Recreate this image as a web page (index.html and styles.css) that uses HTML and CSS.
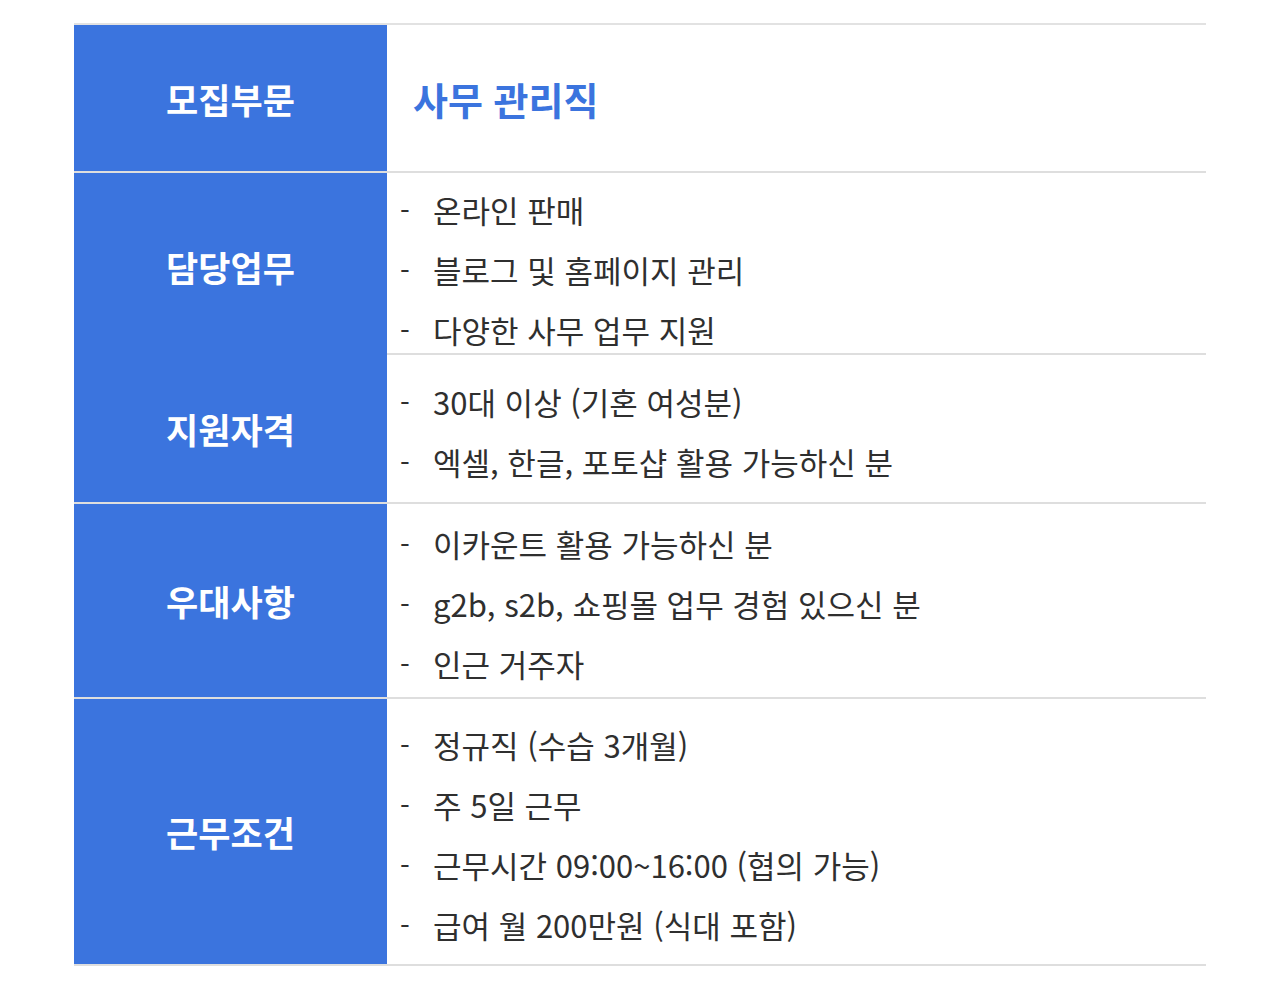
FILE: index.html
```html
<!DOCTYPE html>
<html lang="ko">
<head>
<meta charset="utf-8">
<link rel="stylesheet" href="styles.css">
</head>
<body>
<div class="table">
  <div class="row r1">
    <div class="label">모집부문</div>
    <div class="content"><div class="title">사무 관리직</div></div>
  </div>
  <div class="row r2">
    <div class="label">담당업무</div>
    <ul class="content list">
      <li>온라인 판매</li>
      <li>블로그 및 홈페이지 관리</li>
      <li>다양한 사무 업무 지원</li>
    </ul>
  </div>
  <div class="row r3">
    <div class="label">지원자격</div>
    <ul class="content list">
      <li>30대 이상 (기혼 여성분)</li>
      <li>엑셀, 한글, 포토샵 활용 가능하신 분</li>
    </ul>
  </div>
  <div class="row r4">
    <div class="label">우대사항</div>
    <ul class="content list">
      <li>이카운트 활용 가능하신 분</li>
      <li>g2b, s2b, 쇼핑몰 업무 경험 있으신 분</li>
      <li>인근 거주자</li>
    </ul>
  </div>
  <div class="row r5">
    <div class="label">근무조건</div>
    <ul class="content list">
      <li>정규직 (수습 3개월)</li>
      <li>주 5일 근무</li>
      <li>근무시간 09:00~16:00 (협의 가능)</li>
      <li>급여 월 200만원 (식대 포함)</li>
    </ul>
  </div>
</div>
</body>
</html>
```

FILE: styles.css
```css
html, body {
  margin: 0;
  padding: 0;
  background: #ffffff;
}
body {
  font-family: "Noto Sans CJK KR", "Noto Sans", sans-serif;
}
.table {
  margin: 23px 0 0 74px;
  width: 1132px;
  border-top: 2px solid #e2e2e2;
}
.row {
  display: grid;
  grid-template-columns: 313px 1fr;
  border-bottom: 2px solid #dedede;
  box-sizing: border-box;
}
.r1 { height: 148px; }
.r2 { height: 182px; }
.r3 { height: 149px; }
.r4 { height: 195px; }
.r5 { height: 267px; }
.label {
  background: #3b74de;
  color: #ffffff;
  font-weight: 700;
  font-size: 35px;
  display: flex;
  align-items: center;
  justify-content: center;
}
.content {
  display: flex;
  flex-direction: column;
  justify-content: center;
  margin: 0;
  padding: 0 0 0 26px;
}
.title {
  color: #3b74de;
  font-weight: 700;
  font-size: 38px;
}
.list {
  list-style: none;
  padding: 7px 0 0 13px;
  color: #2f2f2f;
  font-size: 31px;
}
.list li {
  line-height: 60px;
  height: 60px;
  display: flex;
}
.list li::before {
  content: "-";
  width: 33px;
  flex: none;
  font-size: 28px;
}
```
